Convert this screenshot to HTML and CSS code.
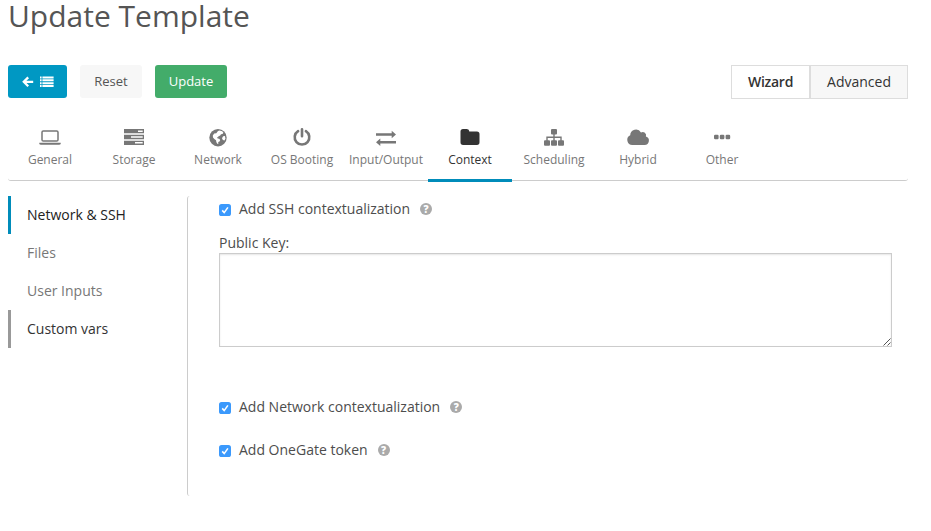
FILE: index.html
```html
<!DOCTYPE html>
<html lang="en">
<head>
<meta charset="utf-8">
<title>Update Template</title>
<link rel="stylesheet" href="styles.css">
</head>
<body>
<main class="page">
  <h1 class="title"><span>Update Template</span></h1>
  <div class="toolbar">
    <div class="actions">
      <button class="btn primary" aria-label="Back to list">
        <svg width="33" height="14" viewBox="0 0 33 14"><path d="M7.2 2.4L2.8 6.8l4.4 4.4M3 6.8h9.2" fill="none" stroke="#fff" stroke-width="2.3"/><path d="M19 1.4h1.6v2H19zM19 4.3h1.6v2H19zM19 7.2h1.6v2H19zM19 10.1h1.6v2H19zM21.4 1.4h11.2v2H21.4zM21.4 4.3h11.2v2H21.4zM21.4 7.2h11.2v2H21.4zM21.4 10.1h11.2v2H21.4z" fill="#fff"/></svg>
      </button>
      <button class="btn reset">Reset</button>
      <button class="btn success">Update</button>
    </div>
    <div class="modes"><button class="mode on">Wizard</button><button class="mode">Advanced</button></div>
  </div>
  <nav class="tabs">
    <a class="tab"><svg viewBox="0 0 24 20"><rect x="4" y="4" width="16" height="10" rx="1.3" fill="none" stroke="currentColor" stroke-width="1.5"/><path d="M1.3 15.7h21.4v.8q0 1.2-1.8 1.2H3.1q-1.8 0-1.8-1.2z"/></svg><span>General</span></a>
    <a class="tab"><svg viewBox="0 0 24 20"><path fill-rule="evenodd" d="M2 2h20v4.3H2zM16 3.4v1.5h4.7V3.4zM2 7.8h20v4.4H2zM9 9.3v1.4h11.7V9.3zM2 13.7h20V18H2zM13 15.1v1.5h7.7v-1.5z"/></svg><span>Storage</span></a>
    <a class="tab"><svg viewBox="0 0 24 20"><circle cx="12" cy="10.7" r="8.7"/><path fill="#fff" d="M12 4l1.6-.6 2.6.9 1.2 1.5-.9 1.2-1.5.3-1 1.4-1.4.3-.4 1.2-1.3.1.8 1.2 1.5.2 1 1.3-.7 1.6-1.3.5.2 1.7-.8.2-1.2-1.8-.4-1.9-1.7-1.2-1.3-1.6-.2-2 1.4-1.9 2.1-.3z"/><path fill="#fff" d="M17.1 9.2l1.9-.2.4 2.4-.9 2-1.6-.4-.9-1.8z"/></svg><span>Network</span></a>
    <a class="tab"><svg viewBox="0 0 24 20"><path d="M8.1 4.1a7.3 7.3 0 1 0 7.8 0M12 2.3v7" fill="none" stroke="currentColor" stroke-width="2.6" stroke-linecap="round"/></svg><span>OS Booting</span></a>
    <a class="tab"><svg viewBox="0 0 24 20"><path d="M2 6.2h15.7V3.8L22 7.5l-4.3 3.7V8.7H2zM22 13.9H6.3v-2.4L2 15.2l4.3 3.7v-2.5H22z"/></svg><span>Input/Output</span></a>
    <a class="tab active"><svg viewBox="0 0 24 20"><path d="M5 2h3.9q2.4 0 2.4 2.5h7.6q2.6 0 2.6 2.6v8.2q0 2.6-2.6 2.6H5.1q-2.6 0-2.6-2.6V4.6Q2.5 2 5 2z"/></svg><span>Context</span></a>
    <a class="tab"><svg viewBox="0 0 24 20"><rect x="9" y="2" width="6" height="5.6" rx="1"/><rect x="2" y="13.3" width="6" height="5.5" rx="1"/><rect x="9" y="13.3" width="6" height="5.5" rx="1"/><rect x="16" y="13.3" width="6" height="5.5" rx="1"/><path d="M12 7v7M5 14v-3.7h14V14" fill="none" stroke="currentColor" stroke-width="1.4"/></svg><span>Scheduling</span></a>
    <a class="tab"><svg viewBox="0 0 24 20"><path d="M6.3 18a5.1 5.1 0 0 1-2.1-9.7A5.8 5.8 0 0 1 15 5.5a3.4 3.4 0 0 1 4.9 4.1A4.3 4.3 0 0 1 18.6 18z"/></svg><span>Hybrid</span></a>
    <a class="tab"><svg viewBox="0 0 24 20"><rect x="4" y="7.7" width="4.6" height="4.6" rx="1.2"/><rect x="9.8" y="7.7" width="4.6" height="4.6" rx="1.2"/><rect x="15.6" y="7.7" width="4.6" height="4.6" rx="1.2"/></svg><span>Other</span></a>
  </nav>
  <section class="content">
    <nav class="side">
      <a class="item current">Network &amp; SSH</a>
      <a class="item">Files</a>
      <a class="item">User Inputs</a>
      <a class="item hover">Custom vars</a>
    </nav>
    <div class="panel">
      <label class="check"><svg class="box" viewBox="0 0 12 12"><rect width="12" height="12" rx="2.6" fill="#3b99fc"/><path d="M3.2 6.4l2 2.2 3.7-5.2" fill="none" stroke="#fff" stroke-width="1.6"/></svg><span>Add SSH contextualization</span><i class="help">?</i></label>
      <label class="keylabel" for="key">Public Key:</label>
      <div class="keywrap"><textarea id="key"></textarea><svg class="grip" viewBox="0 0 8 8"><path d="M.5 7.5l7-7M4.5 7.5l3-3" stroke="#555" stroke-width="1" fill="none"/></svg></div>
      <label class="check net"><svg class="box" viewBox="0 0 12 12"><rect width="12" height="12" rx="2.6" fill="#3b99fc"/><path d="M3.2 6.4l2 2.2 3.7-5.2" fill="none" stroke="#fff" stroke-width="1.6"/></svg><span>Add Network contextualization</span><i class="help">?</i></label>
      <label class="check token"><svg class="box" viewBox="0 0 12 12"><rect width="12" height="12" rx="2.6" fill="#3b99fc"/><path d="M3.2 6.4l2 2.2 3.7-5.2" fill="none" stroke="#fff" stroke-width="1.6"/></svg><span>Add OneGate token</span><i class="help">?</i></label>
    </div>
  </section>
</main>
</body>
</html>
```
FILE: styles.css
```css
* { box-sizing: border-box; }
body { margin: 0; background: #fff; color: #4d4d4d; font-family: "Open Sans", sans-serif; font-size: 14px; }
button { margin: 0; padding: 0; font: inherit; border: 0; }
.page { width: 900px; margin-left: 8px; }
.title { margin: 0; height: 65px; font-size: 30px; font-weight: 400; line-height: 32px; color: #555; }
.toolbar { display: flex; justify-content: space-between; height: 34px; }
.actions { display: flex; gap: 13px; }
.btn { height: 33px; padding-bottom: 2px; border-radius: 3px; font-size: 13px; }
.primary { width: 59px; padding-bottom: 0; background: #0098c3; display: flex; align-items: center; justify-content: center; }
.reset { width: 62px; background: #f7f7f7; color: #555; }
.success { width: 72px; background: #43ac6a; color: #fff; }
.modes { display: flex; width: 177px; height: 34px; }
.mode { width: 98px; padding-bottom: 2px; border: 1px solid #ddd; background: #f7f7f7; color: #333; }
.mode.on { width: 79px; background: #fff; font-weight: 600; letter-spacing: -.25px; }
.tabs { display: flex; height: 82px; padding-top: 28px; border-bottom: 1px solid #ccc; border-radius: 3px; }
.tab { width: 84px; height: 55px; display: flex; flex-direction: column; align-items: center; color: #777; font-size: 12px; line-height: 16px; white-space: nowrap; }
.tab svg { width: 24px; height: 20px; margin-bottom: 5px; fill: currentColor; flex: none; overflow: visible; }
.tab.active { color: #333; border-bottom: 3px solid #008cba; }
.content { display: flex; padding-top: 15px; }
.side { width: 179px; }
.item { display: block; height: 38px; line-height: 38px; padding-left: 16px; border-left: 3px solid transparent; color: #777; }
.item.current { color: #222; border-color: #008cba; }
.item.hover { color: #333; border-color: #999; }
.panel { width: 721px; height: 300px; border-left: 1px solid #ccc; border-radius: 3px 0 0 3px; padding: 3px 0 0 31px; }
.check { display: flex; align-items: center; height: 19px; }
.box { width: 12px; height: 12px; margin: 2px 8px 0 0; }
.help { width: 12px; height: 12px; margin-left: 10px; border-radius: 50%; background: #aaa; color: #fff; font-size: 10px; font-weight: 800; font-style: normal; line-height: 12px; text-align: center; }
.keylabel { display: block; height: 20px; line-height: 19px; margin-top: 15px; }
.keywrap { position: relative; width: 673px; height: 94px; }
textarea { display: block; width: 100%; height: 100%; resize: none; border: 1px solid #ccc; background: #fff; box-shadow: inset 0 1px 2px rgba(0,0,0,.1); }
.grip { position: absolute; right: 1px; bottom: 1px; width: 8px; height: 8px; }
.net { margin-top: 50px; }
.token { margin-top: 24px; }
```
